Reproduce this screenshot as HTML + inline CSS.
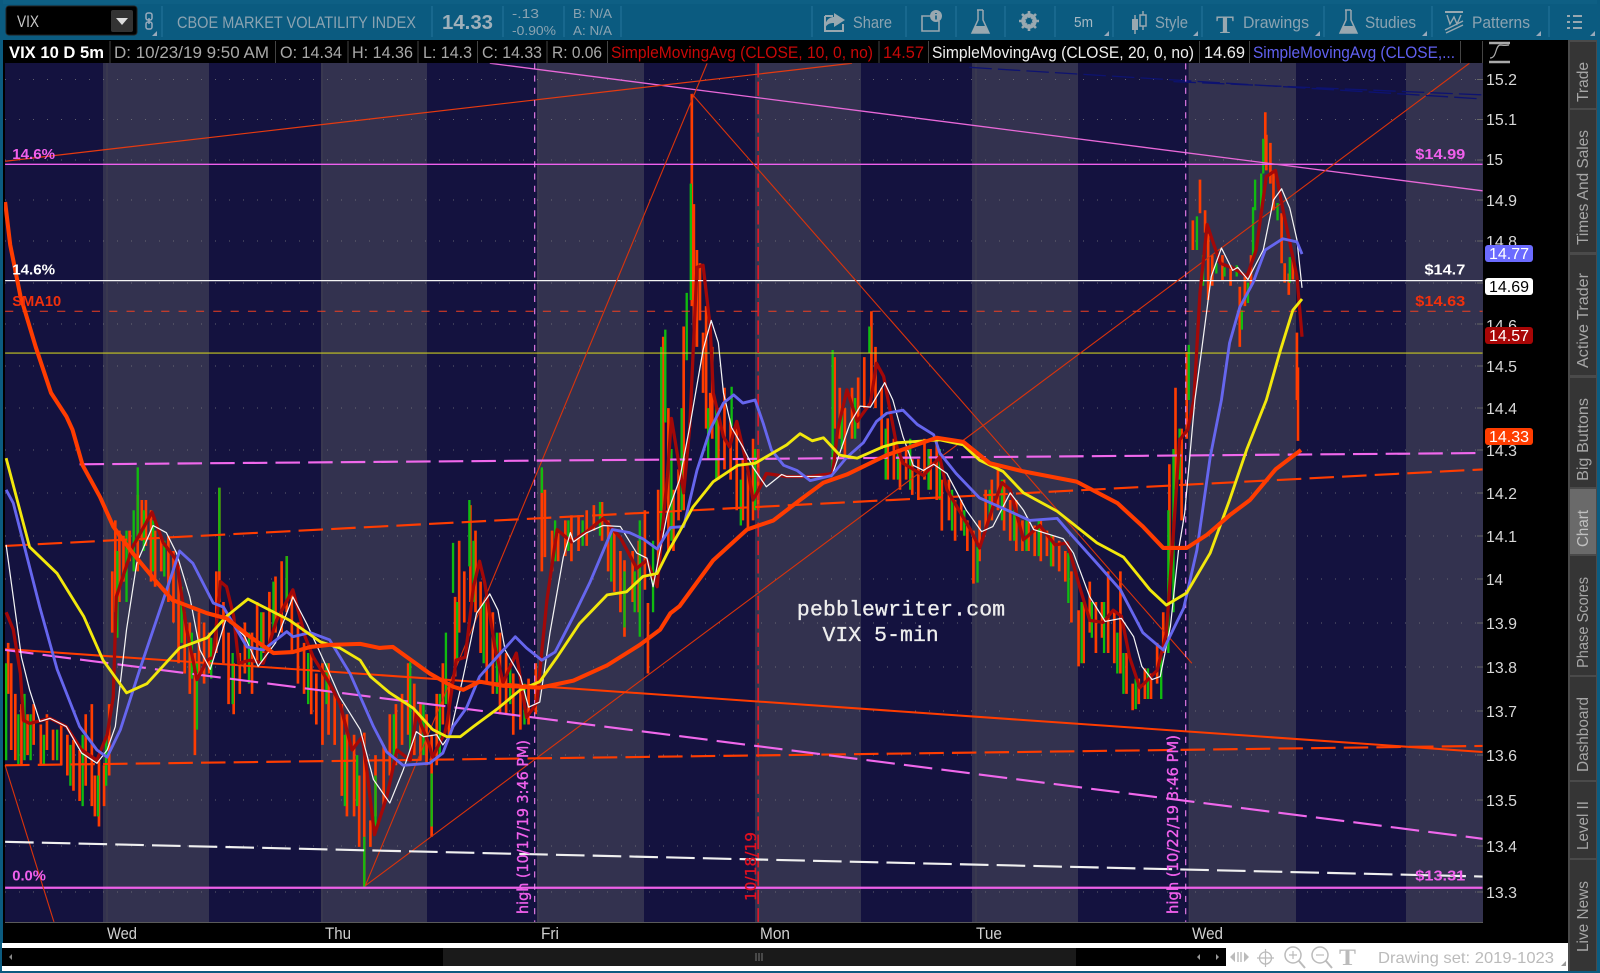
<!DOCTYPE html>
<html>
<head>
<meta charset="utf-8">
<title>VIX Chart</title>
<style>
html,body{margin:0;padding:0;background:#000;width:1600px;height:973px;overflow:hidden}
svg{display:block}
text{font-family:"Liberation Sans",sans-serif}
.tb{fill:#8ba3b1;font-size:16.5px}
.hd{fill:#a8a8a8;font-size:16.5px}
.ax{fill:#d8d8d8;font-size:15.5px}
.tab{fill:#a6a6a6;font-size:15.5px}
.dt{fill:#d0d0d0;font-size:16.5px}
.sep{stroke:#1d6d92;stroke-width:1.5}
.hs{stroke:#444;stroke-width:1}
.ic{fill:#99a8b0}
.tri{fill:#9ab}
</style>
</head>
<body>
<svg width="1600" height="973" viewBox="0 0 1600 973" xmlns="http://www.w3.org/2000/svg">
<defs>
<clipPath id="plot"><rect x="4" y="62" width="1449" height="841.5"/></clipPath>
</defs>
<rect width="1600" height="973" fill="#000"/>
<rect width="1600" height="41" fill="#0b5b80"/>
<rect width="1600" height="4" fill="#0e5f84"/>
<rect x="0" y="0" width="3" height="973" fill="#0b5b80"/>
<rect x="1597" y="0" width="3" height="973" fill="#0b5b80"/>

<!-- TOOLBAR -->
<rect x="6" y="6" width="131" height="29" rx="3" fill="#000" stroke="#222"/>
<text x="17" y="27" fill="#c8c8c8" font-size="16.500" textLength="22" lengthAdjust="spacingAndGlyphs">VIX</text>
<rect x="111" y="10" width="22" height="22" rx="2" fill="#333"/>
<path d="M116 18h12l-6 7z" fill="#ddd"/>
<rect x="146" y="13" width="6" height="7" rx="2" fill="none" stroke="#9ab" stroke-width="1.5"/>
<rect x="146" y="22" width="6" height="7" rx="2" fill="none" stroke="#9ab" stroke-width="1.5"/>
<path d="M149 18v6" stroke="#9ab" stroke-width="1.5"/>
<path class="tri" d="M157 31v5h-5z"/>
<path class="sep" d="M162 6v31M432 6v31M503 6v31M564 6v31M621 6v31M812 6v31M906 6v31M956 6v31M1005 6v31M1055 6v31M1113 6v31M1202 6v31M1324 6v31M1432 6v31M1549 6v31"/>
<text class="tb" x="177" y="28" textLength="239" lengthAdjust="spacingAndGlyphs">CBOE MARKET VOLATILITY INDEX</text>
<text x="442" y="29" fill="#9fb0ba" font-size="20" font-weight="bold" textLength="51" lengthAdjust="spacingAndGlyphs">14.33</text>
<text x="512" y="18" fill="#8ba3b1" font-size="13" textLength="27" lengthAdjust="spacingAndGlyphs">-.13</text>
<text x="512" y="35" fill="#8ba3b1" font-size="13" textLength="44" lengthAdjust="spacingAndGlyphs">-0.90%</text>
<text x="573" y="18" fill="#8ba3b1" font-size="13" textLength="39" lengthAdjust="spacingAndGlyphs">B: N/A</text>
<text x="573" y="35" fill="#8ba3b1" font-size="13" textLength="39" lengthAdjust="spacingAndGlyphs">A: N/A</text>

<!-- share -->
<path d="M825 16h8M825 16v15h18v-7" fill="none" stroke="#99a8b0" stroke-width="2"/>
<path d="M834 13l11 7-11 7v-4c-4 0-7 1-9 5 0-6 3-11 9-11z" class="ic"/>
<text class="tb" x="853" y="28" textLength="39" lengthAdjust="spacingAndGlyphs">Share</text>
<!-- info -->
<path d="M937 16h-15v15h17v-10" fill="none" stroke="#99a8b0" stroke-width="1.6"/>
<circle cx="936" cy="16" r="6" class="ic"/>
<path d="M936 13v1M936 15.5v4" stroke="#0b5b80" stroke-width="1.6"/>
<!-- flask -->
<path d="M977 10h6M978 10v10l-6 13h17l-6-13v-10" fill="none" stroke="#99a8b0" stroke-width="1.5"/>
<path d="M975 26h10l4 7h-17z" class="ic"/>
<!-- gear -->
<circle cx="1029" cy="21" r="6" fill="none" stroke="#99a8b0" stroke-width="3.5"/>
<path d="M1029 11v20M1019 21h20M1022 14l14 14M1036 14l-14 14" stroke="#99a8b0" stroke-width="2.6"/>
<circle cx="1029" cy="21" r="3.2" fill="#0b5b80"/>
<text x="1074" y="27" fill="#a9bac4" font-size="14.500" textLength="19" lengthAdjust="spacingAndGlyphs">5m</text>
<path class="tri" d="M1109 31v5h-5z"/>
<!-- style -->
<path d="M1135 15v19M1143 11v19" stroke="#99a8b0" stroke-width="1.5"/>
<rect x="1132" y="19" width="6" height="11" class="ic"/>
<rect x="1140" y="15" width="6" height="11" fill="#0b5b80" stroke="#99a8b0" stroke-width="1.5"/>
<text class="tb" x="1155" y="28" textLength="33" lengthAdjust="spacingAndGlyphs">Style</text>
<path class="tri" d="M1198 31v5h-5z"/>
<!-- T -->
<text x="1216" y="33" fill="#99a8b0" font-size="25" font-weight="bold" style="font-family:'Liberation Serif',serif" textLength="18" lengthAdjust="spacingAndGlyphs">T</text>
<text class="tb" x="1243" y="28" textLength="66" lengthAdjust="spacingAndGlyphs">Drawings</text>
<path class="tri" d="M1320 31v5h-5z"/>
<!-- flask 2 -->
<path d="M1345 10h6M1346 10v10l-6 13h17l-6-13v-10" fill="none" stroke="#99a8b0" stroke-width="1.5"/>
<path d="M1343 26h10l4 7h-17z" class="ic"/>
<text class="tb" x="1365" y="28" textLength="51" lengthAdjust="spacingAndGlyphs">Studies</text>
<path class="tri" d="M1427 31v5h-5z"/>
<!-- patterns -->
<path d="M1445 12h18" stroke="#99a8b0" stroke-width="2"/>
<path d="M1447 15l3 9 4-7 3 7 4-9M1445 30l18-9M1446 33l17-8" fill="none" stroke="#99a8b0" stroke-width="1.4"/>
<text class="tb" x="1472" y="28" textLength="58" lengthAdjust="spacingAndGlyphs">Patterns</text>
<path class="tri" d="M1541 31v5h-5z"/>
<!-- list -->
<path d="M1567 16h3M1573 16h9M1567 22h3M1573 22h9M1567 28h3M1573 28h9" stroke="#99a8b0" stroke-width="2"/>
<path class="tri" d="M1595 31v5h-5z"/>

<!-- HEADER -->
<rect x="3" y="40" width="1565" height="23" fill="#000"/>
<path class="hs" d="M110 41v22M275.5 41v22M348 41v22M418 41v22M477.5 41v22M547 41v22M607.5 41v22M879 41v22M928.5 41v22M1199.5 41v22M1249.5 41v22M1460.5 41v22M1482.5 41v22"/>
<text x="9" y="58" fill="#fff" font-size="16.500" font-weight="bold" textLength="95" lengthAdjust="spacingAndGlyphs">VIX 10 D 5m</text>
<text class="hd" x="114" y="58" textLength="155" lengthAdjust="spacingAndGlyphs">D: 10/23/19 9:50 AM</text>
<text class="hd" x="280" y="58" textLength="62" lengthAdjust="spacingAndGlyphs">O: 14.34</text>
<text class="hd" x="352" y="58" textLength="61" lengthAdjust="spacingAndGlyphs">H: 14.36</text>
<text class="hd" x="423" y="58" textLength="49" lengthAdjust="spacingAndGlyphs">L: 14.3</text>
<text class="hd" x="482" y="58" textLength="60" lengthAdjust="spacingAndGlyphs">C: 14.33</text>
<text class="hd" x="552" y="58" textLength="50" lengthAdjust="spacingAndGlyphs">R: 0.06</text>
<text x="611" y="58" fill="#c80808" font-size="16.500" textLength="262" lengthAdjust="spacingAndGlyphs">SimpleMovingAvg (CLOSE, 10, 0, no)</text>
<text x="883" y="58" fill="#c80808" font-size="16.500" textLength="41" lengthAdjust="spacingAndGlyphs">14.57</text>
<text x="932" y="58" fill="#eee" font-size="16.500" textLength="262" lengthAdjust="spacingAndGlyphs">SimpleMovingAvg (CLOSE, 20, 0, no)</text>
<text x="1204" y="58" fill="#eee" font-size="16.500" textLength="41" lengthAdjust="spacingAndGlyphs">14.69</text>
<text x="1253" y="58" fill="#6060f0" font-size="16.500" textLength="202" lengthAdjust="spacingAndGlyphs">SimpleMovingAvg (CLOSE,...</text>
<path d="M1489 43h21M1489 62h21" stroke="#aaa" stroke-width="2.5"/>
<path d="M1490 58c7 0 5-12 10-13 3 0 4 1 9 0" fill="none" stroke="#aaa" stroke-width="1.2"/>

<!-- PLOT -->
<rect x="5" y="63" width="1478" height="859" fill="#14123f"/>
<g fill="#33324f">
<rect x="103" y="63" width="106" height="859"/>
<rect x="321" y="63" width="106" height="859"/>
<rect x="537" y="63" width="107" height="859"/>
<rect x="755" y="63" width="106" height="859"/>
<rect x="972" y="63" width="106" height="859"/>
<rect x="1189" y="63" width="107" height="859"/>
<rect x="1406" y="63" width="77" height="859"/>
</g>
<path d="M5 922.5h1478" stroke="#5a5a5a"/>
<path d="M107 63v859M322 63v859M538 63v859M759 63v859M976 63v859M1189 63v859" stroke="#4c4c50" stroke-width="1" opacity=".5"/>
<path d="M5 79.5h1478M5 119.5h1478M5 160h1478M5 200h1478M5 241h1478M5 283h1478M5 324h1478M5 366h1478M5 408h1478M5 450h1478M5 493h1478M5 536h1478M5 579h1478M5 623h1478M5 667h1478M5 711h1478M5 755h1478M5 800h1478M5 846h1478M5 892h1478" stroke="#7a7a80" stroke-width="1" stroke-dasharray="1 13" opacity=".75"/>
<path d="M1477 79.5h6M1477 119.5h6M1477 160h6M1477 200h6M1477 241h6M1477 283h6M1477 324h6M1477 366h6M1477 408h6M1477 450h6M1477 493h6M1477 536h6M1477 579h6M1477 623h6M1477 667h6M1477 711h6M1477 755h6M1477 800h6M1477 846h6M1477 892h6" stroke="#666"/>

<g transform="scale(1.0204)" clip-path="url(#plot)" fill="none" stroke-linejoin="round">
<!-- candles orange -->
<path stroke="#ff3c00" stroke-width="2.6" d="M8 630V680M11 650V735M15 680V745M21 690V750M27 700V740M33 690V730M40 710V750M46 700V735M52 715V745M60 710V750M66 720V760M72 725V775M78 735V785M84 700V770M90 690V790M93 760V800M97 745V810M102 750V790M107 690V760M110 560V620M113 510V600M117 520V590M121 525V570M127 520V550M135 485V560M139 490V530M143 490V535M148 500V570M152 520V575M158 525V560M165 525V590M170 540V610M175 555V650M181 600V660M186 610V680M191 640V740M195 600V660M200 610V670M205 620V660M212 560V640M215 478V590M219 590V650M224 620V690M229 650V700M235 640V680M240 610V660M247 620V680M252 590V650M258 600V640M264 580V640M270 565V620M276 550V620M281 545V600M286 580V640M292 610V670M298 630V680M305 640V700M310 660V710M316 650V730M322 650V720M328 680V730M335 690V780M340 700V800M347 720V800M352 760V830M357 718V869M363 804V830M368 740V800M376 730V790M382 700V760M388 690V750M394 680V730M400 650V720M406 670V740M412 690V745M418 700V750M423 720V820M428 680V750M434 650V710M440 670V720M446 585V663M450 530V620M455 560V610M461 495V590M466 520V600M471 570V640M477 590V670M483 600V680M490 620V700M496 640V700M503 660V720M510 670V715M518 665V710M525 650V700M531 460V560M534 480V546M541 520V560M547 520V550M554 510V545M560 505V550M567 505V540M575 500V535M582 495V520M590 492V530M596 510V560M602 520V580M608 540V600M612 549V624M620 540V590M626 530V600M632 500V578M635 591V660M645 480V560M650 330V500M655 400V540M660 480V540M665 460V510M670 320V500M678 92V300M680 200V340M683 245V340M686 258V314M689 326V385M692 300V420M696 385V421M698 340V430M704 400V470M710 380V460M716 410V470M722 420V500M728 450V510M733 460V520M738 430V510M743 440V500M818 350V420M823 380V430M828 400V450M835 380V430M841 370V420M847 350V400M854 305V390M858 340V400M864 380V440M870 410V470M876 430V470M882 440V480M888 440V470M894 450V485M900 450V490M906 430V470M912 440V480M918 430V490M923 470V520M930 470V510M936 490V530M942 490V520M948 510V540M954 520V572M960 510V550M966 480V520M972 470V510M978 460V500M984 470V520M990 490V530M996 490V540M1002 510V540M1008 510V540M1014 515V545M1020 510V550M1026 520V545M1032 525V555M1038 530V560M1044 540V570M1050 560V610M1057 598V653M1062 590V650M1068 570V620M1074 590V640M1080 590V625M1086 560V640M1092 600V650M1098 560V660M1104 640V680M1110 670V696M1116 665V690M1122 655V685M1128 660V685M1134 630V670M1140 600V640M1146 455V560M1152 380V480M1158 420V510M1163 345V430M1169 216V245M1176 176V209M1181 206V228M1184 229V294M1188 250V280M1198 250V275M1206 260V280M1215 281V340M1220 270V300M1226 250V280M1240 110V160M1241 132V167M1245 140V180M1248 167V206M1256 209V258M1259 258V277M1263 268V289M1267 252V274M1271 326V392M1272 360V432"/>
<!-- candles green -->
<path stroke="#10bb10" stroke-width="2.3" d="M6 650V745M18 700V750M24 680V745M30 700V745M43 720V750M56 715V745M69 730V770M81 720V790M96 760V800M104 720V770M115 540V625M124 520V590M131 500V560M135 458V530M141 500V540M150 510V560M161 530V565M178 575V630M188 620V665M193 650V715M207 625V665M215 478V560M228 640V690M244 620V670M256 600V650M268 570V620M281 545V590M302 640V690M320 650V690M338 720V790M350 740V790M357 820V869M368 760V810M386 700V750M402 649V738M415 690V740M423 758V810M431 680V740M437 620V690M444 532V581M448 590V650M460 490V555M464 530V590M474 590V650M487 620V680M500 650V690M514 670V710M531 458V483M544 510V550M557 510V540M571 510V535M588 492V525M599 520V570M612 560V615M622 560V600M627 510V624M640 530V600M648 340V520M652 323V414M658 440V530M668 400V500M673 287V353M677 180V294M694 400V450M702 400V470M717 379V418M726 470V515M740 440V500M816 343V464M825 400V440M838 390V430M852 320V346M868 420V470M880 440V470M892 430V480M910 440V480M921 440V490M933 480V520M945 500V525M958 536V571M970 480V510M982 470V510M994 500V530M1006 510V540M1018 510V545M1030 525V555M1047 542V591M1060 590V650M1070 590V625M1082 590V640M1095 620V660M1101 640V680M1113 665V695M1125 655V685M1138 640V685M1145 500V640M1150 440V600M1156 420V470M1165 338V392M1173 212V245M1179 250V280M1192 258V268M1200 262V271M1212 260V271M1217 304V323M1223 277V297M1228 203V255M1230 176V206M1236 170V206M1238 136V170M1252 199V216M1264 252V277"/>
<!-- horizontal & trend -->
<path d="M5 161H1453" stroke="#ee60ee" stroke-width="1.3"/>
<path d="M5 275H1453" stroke="#f4f4f4" stroke-width="1.3"/>
<path d="M5 305H1453" stroke="#f04020" stroke-width="1" stroke-dasharray="8 9"/>
<path d="M5 346H1453" stroke="#c8c820" stroke-width="1.2"/>
<path d="M5 870H1453" stroke="#ee60e8" stroke-width="2.2"/>
<path d="M480 62L1453 187" stroke="#e868d8" stroke-width="1.3"/>
<path d="M5 158L835 62" stroke="#e63a10" stroke-width="1.2"/>
<path d="M358 868L693 62M358 868L1440 62M678 92L1168 650M5 750L53 904" stroke="#d8330c" stroke-width="1.1"/>
<path d="M950 66L1453 97M1150 80L1453 93" stroke="#0d1270" stroke-width="1.3" stroke-dasharray="22 6"/>
<path d="M524 62V904M1162 62V904" stroke="#ee80ee" stroke-width="1.1" stroke-dasharray="6 6"/>
<path d="M743 62V904" stroke="#e01828" stroke-width="1.6" stroke-dasharray="14 4"/>
<path d="M78 455L1453 444" stroke="#f068ec" stroke-width="2.1" stroke-dasharray="24 8"/>
<path d="M5 535L1453 460" stroke="#ff3c00" stroke-width="2.1" stroke-dasharray="24 8"/>
<path d="M5 750L1453 731" stroke="#ff3c00" stroke-width="2.1" stroke-dasharray="24 8"/>
<path d="M5 636L1453 737" stroke="#ff3c00" stroke-width="2"/>
<path d="M5 637L1453 822" stroke="#f068ec" stroke-width="2.1" stroke-dasharray="28 9"/>
<path d="M5 825L1453 859" stroke="#f0f0f0" stroke-width="2.1" stroke-dasharray="28 8"/>
<!-- dark red -->
<polyline stroke="#a30808" stroke-width="3.2" points="6,600 13,617 20,660 23,706 29,709 49,704 65,712 80,735 95,745 105,720 111,683 114,585 130,536 149,502 160,532 173,549 183,617 193,666 203,647 209,644 216,570 222,575 229,604 234,650 245,647 258,650 271,608 287,578 299,624 307,644 323,670 333,689 345,735 355,722 359,751 367,818 379,781 389,735 402,745 408,699 420,728 424,742 436,718 438,709 447,647 456,644 464,575 470,550 475,571 485,634 493,669 506,640 516,703 526,689 536,588 546,519 560,531 575,521 591,508 608,527 624,557 634,549 644,575 654,467 658,410 670,483 676,418 683,262 689,260 696,320 699,385 709,428 715,438 722,413 733,461 738,490 745,477 751,464 771,467 794,467 816,464 821,421 830,382 840,413 853,395 859,356 866,369 879,438 885,454 905,466 921,448 928,480 951,519 960,537 973,497 982,473 990,480 1003,529 1019,515 1034,534 1046,532 1058,575 1068,608 1081,610 1091,598 1099,604 1107,644 1117,674 1134,657 1143,621 1150,522 1156,431 1164,421 1170,392 1176,287 1183,220 1189,238 1196,258 1209,263 1222,271 1231,245 1241,173 1250,167 1258,209 1271,271 1276,330"/>
<!-- white -->
<polyline stroke="#f5f5f5" stroke-width="1.2" points="6,534 13,585 21,644 29,676 39,707 49,704 65,712 80,738 95,748 105,735 113,712 124,617 134,552 150,515 163,522 173,542 186,585 196,637 206,656 222,605 240,624 253,653 270,630 287,585 301,612 323,660 333,683 353,715 366,764 382,787 395,755 408,717 415,722 428,720 434,730 441,720 454,663 467,601 480,582 488,598 495,637 510,663 518,693 529,688 539,620 552,546 559,522 562,531 575,522 591,515 608,516 624,542 634,547 640,575 654,503 666,470 676,418 689,343 697,314 704,336 709,385 717,419 728,438 738,458 751,477 766,465 771,467 815,467 833,415 843,398 853,399 867,375 875,392 885,428 895,456 905,461 915,455 928,464 947,500 962,521 973,516 990,483 1003,500 1013,519 1042,528 1052,542 1068,585 1083,609 1099,606 1111,624 1119,653 1129,666 1137,663 1147,614 1155,539 1161,503 1171,392 1178,340 1187,271 1197,243 1208,265 1213,262 1223,274 1238,245 1248,196 1256,185 1264,204 1271,235 1276,282"/>
<!-- blue -->
<polyline stroke="#6666ee" stroke-width="2.8" points="6,480 13,493 23,532 39,595 56,656 78,712 95,735 105,742 118,715 137,656 160,588 176,540 189,552 209,591 219,595 242,634 258,637 281,619 287,624 304,620 323,627 343,660 366,712 379,737 395,750 421,748 434,738 444,712 457,694 470,663 487,644 505,624 516,635 531,647 544,639 562,604 578,571 600,519 617,522 630,528 644,538 657,517 670,516 683,461 696,421 709,395 719,387 728,395 740,392 748,415 756,441 768,456 781,461 794,471 815,466 830,448 846,434 859,413 869,405 885,402 899,416 915,426 921,444 937,464 960,488 987,500 1009,510 1036,508 1049,523 1075,552 1098,578 1120,620 1140,637 1160,596 1173,539 1186,448 1197,392 1205,336 1215,301 1228,277 1240,245 1257,234 1271,237 1276,249"/>
<!-- yellow -->
<polyline stroke="#f2e80c" stroke-width="2.8" points="6,449 29,536 56,562 82,604 101,647 124,679 144,670 176,635 203,625 222,604 243,587 284,608 314,629 333,635 353,647 363,663 382,679 405,694 424,715 438,722 451,722 464,712 487,695 510,676 529,668 546,644 568,611 595,583 614,580 630,565 644,562 654,542 666,521 679,497 699,472 723,456 740,454 771,436 784,425 796,432 807,429 823,446 840,449 865,438 879,434 921,431 944,436 960,451 983,462 1003,483 1036,501 1075,532 1101,546 1127,578 1143,593 1163,581 1186,542 1205,490 1222,440 1241,392 1254,346 1267,304 1276,293"/>
<!-- SMA thick -->
<polyline stroke="#ff3c00" stroke-width="4" points="5,198 10,240 20,290 35,340 50,385 65,408 71,421 81,456 98,487 111,516 130,542 154,571 169,588 203,601 222,606 245,624 268,640 287,639 304,634 323,632 353,631 372,635 385,634 421,660 444,673 454,676 470,668 493,672 529,674 562,667 595,652 627,632 647,617 657,601 666,594 699,549 732,519 758,510 784,490 807,473 830,465 869,446 918,429 944,433 970,454 1003,462 1055,472 1095,493 1120,516 1140,537 1163,537 1183,524 1205,505 1225,490 1250,460 1275,441"/>
</g>

<g transform="scale(1.0204)" font-size="14.500">
<text x="12" y="156" fill="#f060ec" font-weight="bold" textLength="42" lengthAdjust="spacingAndGlyphs">14.6%</text>
<text x="12" y="269" fill="#fff" font-weight="bold" textLength="42" lengthAdjust="spacingAndGlyphs">14.6%</text>
<text x="12" y="300" fill="#f0300c" font-weight="bold" textLength="48" lengthAdjust="spacingAndGlyphs">SMA10</text>
<text x="12" y="863" fill="#f060ec" font-weight="bold" textLength="33" lengthAdjust="spacingAndGlyphs">0.0%</text>
<text x="1387" y="156" fill="#f060ec" font-weight="bold" textLength="49" lengthAdjust="spacingAndGlyphs">$14.99</text>
<text x="1396" y="269" fill="#fff" font-weight="bold" textLength="40" lengthAdjust="spacingAndGlyphs">$14.7</text>
<text x="1387" y="300" fill="#f0300c" font-weight="bold" textLength="49" lengthAdjust="spacingAndGlyphs">$14.63</text>
<text x="1387" y="863" fill="#f060ec" font-weight="bold" textLength="49" lengthAdjust="spacingAndGlyphs">$13.31</text>
<text x="781" y="603" fill="#eee" font-size="21" stroke="#eee" stroke-width=".3" style="font-family:'Liberation Mono',monospace" textLength="204">pebblewriter.com</text>
<text x="806" y="628" fill="#eee" font-size="21" stroke="#eee" stroke-width=".3" style="font-family:'Liberation Mono',monospace" textLength="114">VIX 5-min</text>
</g>
<text transform="translate(528 914) rotate(-90)" fill="#f060ec" stroke="#f060ec" stroke-width=".35" font-size="15" style="font-family:'DejaVu Sans',sans-serif" textLength="174" lengthAdjust="spacingAndGlyphs">high (10/17/19 3:46 PM)</text>
<text transform="translate(756 901) rotate(-90)" fill="#e01020" stroke="#e01020" stroke-width=".35" font-size="15" style="font-family:'DejaVu Sans',sans-serif" textLength="69" lengthAdjust="spacingAndGlyphs">10/18/19</text>
<text transform="translate(1178 914) rotate(-90)" fill="#f060ec" stroke="#f060ec" stroke-width=".35" font-size="15" style="font-family:'DejaVu Sans',sans-serif" textLength="179" lengthAdjust="spacingAndGlyphs">high (10/22/19 3:46 PM)</text>

<!-- PRICE AXIS -->
<text class="ax" x="1486" y="85" textLength="31" lengthAdjust="spacingAndGlyphs">15.2</text>
<text class="ax" x="1486" y="125" textLength="31" lengthAdjust="spacingAndGlyphs">15.1</text>
<text class="ax" x="1486" y="165" textLength="17" lengthAdjust="spacingAndGlyphs">15</text>
<text class="ax" x="1486" y="206" textLength="31" lengthAdjust="spacingAndGlyphs">14.9</text>
<text class="ax" x="1486" y="247" textLength="31" lengthAdjust="spacingAndGlyphs">14.8</text>
<text class="ax" x="1486" y="289" textLength="31" lengthAdjust="spacingAndGlyphs">14.7</text>
<text class="ax" x="1486" y="331" textLength="31" lengthAdjust="spacingAndGlyphs">14.6</text>
<text class="ax" x="1486" y="372" textLength="31" lengthAdjust="spacingAndGlyphs">14.5</text>
<text class="ax" x="1486" y="414" textLength="31" lengthAdjust="spacingAndGlyphs">14.4</text>
<text class="ax" x="1486" y="456" textLength="31" lengthAdjust="spacingAndGlyphs">14.3</text>
<text class="ax" x="1486" y="499" textLength="31" lengthAdjust="spacingAndGlyphs">14.2</text>
<text class="ax" x="1486" y="542" textLength="31" lengthAdjust="spacingAndGlyphs">14.1</text>
<text class="ax" x="1486" y="585" textLength="17" lengthAdjust="spacingAndGlyphs">14</text>
<text class="ax" x="1486" y="629" textLength="31" lengthAdjust="spacingAndGlyphs">13.9</text>
<text class="ax" x="1486" y="673" textLength="31" lengthAdjust="spacingAndGlyphs">13.8</text>
<text class="ax" x="1486" y="717" textLength="31" lengthAdjust="spacingAndGlyphs">13.7</text>
<text class="ax" x="1486" y="761" textLength="31" lengthAdjust="spacingAndGlyphs">13.6</text>
<text class="ax" x="1486" y="806" textLength="31" lengthAdjust="spacingAndGlyphs">13.5</text>
<text class="ax" x="1486" y="852" textLength="31" lengthAdjust="spacingAndGlyphs">13.4</text>
<text class="ax" x="1486" y="898" textLength="31" lengthAdjust="spacingAndGlyphs">13.3</text>
<rect x="1485" y="245" width="48" height="17" rx="3" fill="#6b6bff"/>
<text x="1489" y="259" fill="#fff" font-size="15.500" textLength="40" lengthAdjust="spacingAndGlyphs">14.77</text>
<rect x="1485" y="278" width="48" height="17" rx="3" fill="#fff"/>
<text x="1489" y="292" fill="#000" font-size="15.500" textLength="40" lengthAdjust="spacingAndGlyphs">14.69</text>
<rect x="1485" y="327" width="48" height="17" rx="3" fill="#a80606"/>
<text x="1489" y="341" fill="#fff" font-size="15.500" textLength="40" lengthAdjust="spacingAndGlyphs">14.57</text>
<rect x="1485" y="428" width="48" height="17" rx="3" fill="#ff3d00"/>
<text x="1489" y="442" fill="#fff" font-size="15.500" textLength="40" lengthAdjust="spacingAndGlyphs">14.33</text>

<!-- SIDE TABS -->
<rect x="1568" y="40" width="29" height="933" fill="#4a4a4a"/>
<g fill="#353535">
<rect x="1570" y="42" width="26" height="66"/>
<rect x="1570" y="110" width="26" height="142"/>
<rect x="1570" y="255" width="26" height="120"/>
<rect x="1570" y="378" width="26" height="109"/>
<rect x="1570" y="489" width="26" height="65" fill="#6a6a6a"/>
<rect x="1570" y="556" width="26" height="119"/>
<rect x="1570" y="677" width="26" height="103"/>
<rect x="1570" y="782" width="26" height="76"/>
<rect x="1570" y="860" width="26" height="113"/>
</g>
<text class="tab" transform="translate(1588 102) rotate(-90)" textLength="40" lengthAdjust="spacingAndGlyphs">Trade</text>
<text class="tab" transform="translate(1588 245) rotate(-90)" textLength="115" lengthAdjust="spacingAndGlyphs">Times And Sales</text>
<text class="tab" transform="translate(1588 368) rotate(-90)" textLength="95" lengthAdjust="spacingAndGlyphs">Active Trader</text>
<text class="tab" transform="translate(1588 481) rotate(-90)" textLength="83" lengthAdjust="spacingAndGlyphs">Big Buttons</text>
<text class="tab" transform="translate(1588 547) rotate(-90)" textLength="37" lengthAdjust="spacingAndGlyphs" style="fill:#c0c0c0">Chart</text>
<text class="tab" transform="translate(1588 668) rotate(-90)" textLength="91" lengthAdjust="spacingAndGlyphs">Phase Scores</text>
<text class="tab" transform="translate(1588 772) rotate(-90)" textLength="75" lengthAdjust="spacingAndGlyphs">Dashboard</text>
<text class="tab" transform="translate(1588 850) rotate(-90)" textLength="49" lengthAdjust="spacingAndGlyphs">Level II</text>
<text class="tab" transform="translate(1588 952) rotate(-90)" textLength="71" lengthAdjust="spacingAndGlyphs">Live News</text>

<!-- DATE AXIS -->
<text class="dt" x="107" y="939" textLength="30" lengthAdjust="spacingAndGlyphs">Wed</text>
<text class="dt" x="325" y="939" textLength="26" lengthAdjust="spacingAndGlyphs">Thu</text>
<text class="dt" x="541" y="939" textLength="18" lengthAdjust="spacingAndGlyphs">Fri</text>
<text class="dt" x="760" y="939" textLength="30" lengthAdjust="spacingAndGlyphs">Mon</text>
<text class="dt" x="976" y="939" textLength="26" lengthAdjust="spacingAndGlyphs">Tue</text>
<text class="dt" x="1192" y="939" textLength="31" lengthAdjust="spacingAndGlyphs">Wed</text>

<!-- SCROLL BAR -->
<rect x="2" y="943" width="1566" height="28" fill="#fff"/>
<rect x="0" y="971" width="1600" height="2" fill="#0b5b80"/>
<rect x="2" y="948" width="1224" height="18" fill="#000"/>
<rect x="443" y="948" width="633" height="18" fill="#1a1a1a"/>
<path d="M9 957l3-3v6z" fill="#888"/>
<path d="M756 953v8M759 953v8M762 953v8" stroke="#777"/>
<path d="M1197 957l3-3v6zM1219 957l-3-3v6z" fill="#999"/>
<path d="M1230 957l5-5v10zM1249 957l-5-5v10z" fill="#bbb"/>
<path d="M1238 952v10M1241 952v10" stroke="#bbb" stroke-width="1.4"/>
<circle cx="1265.500" cy="958" r="6" fill="none" stroke="#bbb" stroke-width="1.3"/>
<path d="M1265.500 949v18M1257 958h17" stroke="#bbb" stroke-width="1.2"/>
<circle cx="1293" cy="955" r="8" fill="none" stroke="#bbb" stroke-width="1.5"/>
<path d="M1299 961l6 7" stroke="#bbb" stroke-width="2"/>
<path d="M1293 951v8M1289 955h8" stroke="#bbb" stroke-width="1.2"/>
<circle cx="1320" cy="955" r="8" fill="none" stroke="#bbb" stroke-width="1.5"/>
<path d="M1326 961l6 7" stroke="#bbb" stroke-width="2"/>
<path d="M1316 955h8" stroke="#bbb" stroke-width="1.2"/>
<text x="1339" y="965" fill="#bbb" font-size="23" font-weight="bold" style="font-family:'Liberation Serif',serif" textLength="17" lengthAdjust="spacingAndGlyphs">T</text>
<text x="1378" y="963" fill="#bbb" font-size="16" textLength="176" lengthAdjust="spacingAndGlyphs">Drawing set: 2019-1023</text>
<path d="M1566 961v5h-5z" fill="#999"/>
</svg>
</body>
</html>
